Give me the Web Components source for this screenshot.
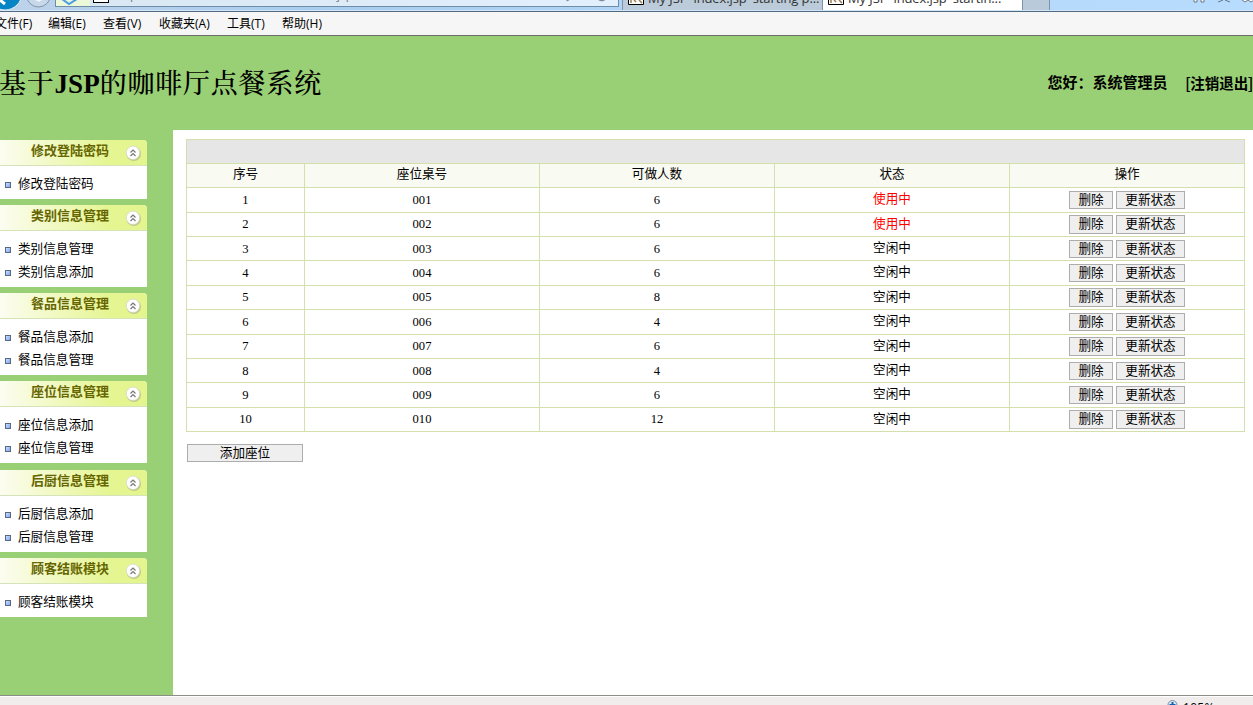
<!DOCTYPE html>
<html lang="zh-CN"><head><meta charset="utf-8"><title>基于JSP的咖啡厅点餐系统</title>
<style>html,body{margin:0;height:100%;overflow:hidden}body{font-family:"Liberation Serif","Noto Sans CJK SC",serif}</style></head>
<body><cafe-app></cafe-app>
<script>
const define=(name,css,html)=>customElements.define(name,class extends HTMLElement{
  connectedCallback(){
    if(this.shadowRoot)return;
    const r=this.attachShadow({mode:'open'});
    r.innerHTML='<style>*{box-sizing:border-box}'+css+'</style>'+(typeof html==='function'?html(this):html);
  }
});

define('browser-tab',`
:host{display:flex;height:10px;overflow:hidden;border-right:1px solid #7d93aa;padding-left:5px;font:13px/18px "Open Sans",sans-serif;color:#333;white-space:nowrap;background:#bccbd9}
:host([active]){background:#fff}
svg{flex:none;width:16px;height:5px;margin-right:4px}
span{display:block;height:18px;margin-top:-11px;letter-spacing:-.1px}`,
`<svg viewBox="0 0 16 5"><path d="M.5-5V4.500h15V-5" fill="#fff" stroke="#000"/><path d="M3 0v3M6 0l2 2M11 0l3 3" stroke="#a17b4d" stroke-width="1.500"/></svg><span><slot></slot></span>`);

define('browser-bar',`
:host{display:flex;height:12px;overflow:hidden;background:linear-gradient(90deg,#bed3ea,#a9cdee 25%,#b4d7fa 60%,#b8dcfd);border-bottom:1px solid #526b83;box-shadow:inset 0 -1px #d3e6f7}
.nav{width:55px;height:11px;flex:none}
.address{width:564px;height:7px;border:1px solid #6d8da8;border-top:0;background:linear-gradient(90deg,#d9e7f3,#e2effc);overflow:hidden;display:flex;flex:none}
.safe{width:34px;background:#edf8d8;flex:none}.safe svg,.nav{display:block}
.file{width:16px;height:3px;border:1px solid #000;border-top:0;background:#fff;margin-left:3px;flex:none}
.url{font:12px/18px "Open Sans",sans-serif;color:#777;margin:-14px 0 0 5px;height:18px;white-space:pre;width:434px;flex:none}
.marks{width:60px;height:5px;margin-left:16px}
.one{width:201px;margin-left:3px;border-left:1px solid #7d93aa;flex:none}
.two{width:200px;flex:none}
.new{width:27px;height:10px;background:#b9cada;border-right:1px solid #7d93aa;flex:none}
.tools{width:64px;height:10px;margin-left:140px;flex:none}`,
`<svg class="nav" viewBox="0 0 55 11"><circle cx="5" cy="-7" r="17" fill="#0784c4" stroke="#e6f0fa"/><path d="M0 0l5 4" stroke="#fff" stroke-width="3"/><circle cx="38.500" cy="-5" r="12" fill="#c6d8e9" stroke="#8394a8"/><path d="M35 0h7l-3 2z" fill="#f1f6fa"/></svg>
<div class="address"><div class="safe"><svg width="34" height="7"><path d="M6-1l7 5 8-5" fill="none" stroke="#4c9de4" stroke-width="2"/></svg></div><div class="file"></div><div class="url">http://localhost:8080/dian/admin/index.jsp</div><svg class="marks" viewBox="0 0 60 5"><path d="M2 0l2 1 2-1zM38 0q4 2 8 0" fill="#667"/></svg></div>
<browser-tab class="one">My JSP 'index.jsp' starting p...</browser-tab><browser-tab class="two" active>My JSP 'index.jsp' startin...</browser-tab><div class="new"></div>
<svg class="tools" viewBox="0 0 64 10"><path d="M4 0v2h3V0M11 0v2h3V0M28 2l5-2M35 0l5 2M52 0l3 2 3-2 3 2 3-2" fill="#fff" stroke="#68788a" stroke-width="1"/></svg>`);

define('menu-bar',`
:host{display:flex;height:24px;background:#f6f6f6;border-bottom:1px solid #6d6d6d;overflow:hidden;font:12px/23px "Open Sans","Noto Sans CJK SC",sans-serif;color:#000;white-space:nowrap}
span{flex:none}span:nth-of-type(1){width:53px;margin-left:-5px}span:nth-of-type(2){width:55px}span:nth-of-type(3){width:56px}span:nth-of-type(4){width:68px}span:nth-of-type(5){width:55px}`,
['文件(F)','编辑(E)','查看(V)','收藏夹(A)','工具(T)','帮助(H)'].map(t=>`<span>${t}</span>`).join(''));

define('site-header',`
:host{display:flex;height:94px;background:#9ad075;color:#000;white-space:nowrap;overflow:hidden}
h1{margin:27px 0 0 -1px;font:700 27px/42px "Liberation Serif","Noto Serif CJK SC","Noto Sans CJK SC",serif}
h1 i{font-style:normal;font-weight:500;letter-spacing:.8px}
.user{margin:35px 18px 0 auto;font:700 15px/24px "Liberation Sans","Noto Sans CJK SC",sans-serif}
.out{margin:35px 0 0;font:700 14.500px/25px "Liberation Sans","Noto Sans CJK SC",sans-serif}.out i{font-style:normal;font-weight:400;font-size:17px}`,
`<h1><i>基于</i>JSP<i>的咖啡厅点餐系统</i></h1><div class="user">您好：系统管理员</div><div class="out"><i>[</i>注销退出<i>]</i></div>`);

define('menu-item',`
:host{display:flex;align-items:center;height:23.300px;padding-left:5px;font:12.600px/20px "Noto Sans CJK SC",sans-serif;color:#000;white-space:nowrap}
i{width:6px;height:6px;border:1px solid #5b6880;background:linear-gradient(135deg,#c7ddff,#7eaaf0);margin:2px 7px 0 0;flex:none}
span{margin-top:-2.400px}`,
`<i></i><span><slot></slot></span>`);

define('menu-group',`
:host{display:block;width:147px;background:#fff;flex:none;border-top-right-radius:4px}
header{height:26px;display:flex;border-bottom:1px solid #d5e2ba;border-top-right-radius:4px;background:linear-gradient(90deg,#fcfdf1,#e5f591 75%,#e4f48f);padding-left:31px}
b{width:95px;font:700 13px/20px "Noto Sans CJK SC",sans-serif;color:#660;white-space:nowrap;flex:none}
svg{width:16px;height:16px;margin-top:5px;flex:none;overflow:visible}
section{padding-top:6.500px}`,
el=>`<header><b>${el.getAttribute('label')}</b><svg viewBox="0 0 16 16"><circle cx="7.800" cy="8.800" r="7.200" fill="#9ca18180"/><circle cx="7" cy="7.800" r="6.700" fill="#fff" stroke="#d2d5c6" stroke-width=".7"/><path d="M4.500 7.500L7 5l2.500 2.500M4.500 11L7 8.500l2.500 2.500" fill="none" stroke="#777" stroke-width="1.200"/></svg></header><section><slot></slot></section>`);

define('side-menu',`
:host{display:block;width:173px;background:#9ad075;padding-top:10px;flex:none;overflow:hidden}`,
[['修改登陆密码',65,59,'修改登陆密码'],['类别信息管理',88,82,'类别信息管理','类别信息添加'],['餐品信息管理',88,82,'餐品信息添加','餐品信息管理'],['座位信息管理',89,82,'座位信息添加','座位信息管理'],['后厨信息管理',88,82,'后厨信息添加','后厨信息管理'],['顾客结账模块',65,59,'顾客结账模块']].map(([t,p,h,...a])=>`<menu-group label="${t}" style="height:${h}px;margin-bottom:${p-h}px">${a.map(x=>`<menu-item>${x}</menu-item>`).join('')}</menu-group>`).join(''));

define('plain-button',`
:host{display:block;text-align:center;height:18px;background:#efefef;border:1px solid #adadad;font:12.600px/14px "Noto Sans CJK SC",sans-serif;color:#000;white-space:nowrap;box-sizing:border-box}`,`<slot></slot>`);

const heights=[25,24,24,25,24,25,24,24,25,24];
const people=[6,6,6,6,8,4,6,4,6,12];
const raised=[1,4,6,9];
define('seat-table',`
:host{display:block;width:1059px;border:1px solid #d3dfac;border-bottom:0;font:12.600px/22px "Liberation Serif","Noto Sans CJK SC",serif;color:#000}
.band{height:24px;background:#e6e6e6;border-bottom:1px solid #d3dfac}
.row{display:grid;grid-template-columns:118px 235px 235px 235px 234px;border-bottom:1px solid #d3dfac}
.row>div{display:flex;justify-content:center;align-items:flex-start;border-right:1px solid #d3dfac;padding-top:1px}
.row>div:last-child{border-right:0}
.head{height:24px;background:#f9faf1}.row.head>div{padding-top:0;line-height:21px}
.row>.state{padding-top:0}.busy{color:#f00}.ops{gap:3px}.row>.ops{padding-top:3px}
.raised>div{padding-top:0}.raised plain-button{height:19px}.row.raised>.ops{padding-top:2px}
.del{width:44px}.upd{width:69px}`,
`<div class="band"></div><div class="row head"><div>序号</div><div>座位桌号</div><div>可做人数</div><div>状态</div><div>操作</div></div>`+
heights.map((h,i)=>`<div class="row ${raised.includes(i)?'raised':''}" style="height:${h}px"><div>${i+1}</div><div>${String(i+1).padStart(3,'0')}</div><div>${people[i]}</div><div class="state ${i<2?'busy':''}">${i<2?'使用中':'空闲中'}</div><div class="ops"><plain-button class="del">删除</plain-button><plain-button class="upd">更新状态</plain-button></div></div>`).join(''));

define('status-bar',`
:host{display:flex;height:10px;overflow:hidden;border-top:1px solid #8b8f88;background:#f0edec;box-shadow:inset 0 1px #fff;padding-left:1167px;font:12px/16px "Open Sans",sans-serif;color:#000}
svg{width:11px;height:11px;margin:4px 5px 0 0;flex:none}span{margin-top:4px;letter-spacing:.3px}`,
`<svg viewBox="0 0 11 11"><circle cx="5.500" cy="5" r="4.500" fill="#d9ecfb" stroke="#7d8b99"/><path d="M5.500 2v6M2.500 5h6" stroke="#1261b4" stroke-width="2"/></svg><span>105%</span>`);

define('cafe-app',`
:host{display:flex;flex-direction:column;width:1253px;height:705px;overflow:hidden}
.body{display:flex;height:565px;flex:none}
main{flex:1;background:#fff;padding:9px 0 0 13px}
.add{width:116px;margin:12px 0 0 1px}`,
`<browser-bar></browser-bar><menu-bar></menu-bar><site-header></site-header><div class="body"><side-menu></side-menu><main><seat-table></seat-table><plain-button class="add">添加座位</plain-button></main></div><status-bar></status-bar>`);
</script></body></html>
